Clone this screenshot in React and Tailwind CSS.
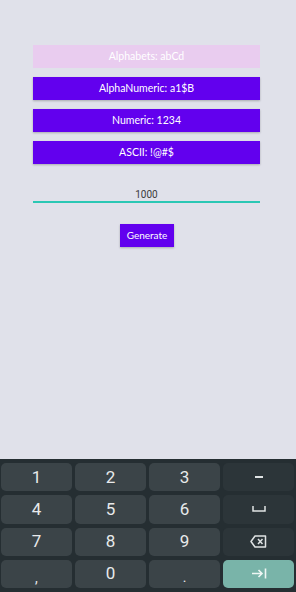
import React from "react";

function Key({ children, variant = "num" }) {
  const cls =
    variant === "num"
      ? "bg-[#3b4448] text-[#e8eaeb]"
      : variant === "fn"
      ? "bg-[#2c3539] text-[#dfe3e4]"
      : "bg-[#79b4a9] text-[#eef6f4]";
  return (
    <div className={`${cls} rounded-[5px] flex items-center justify-center text-[17px] leading-none`}>
      {children}
    </div>
  );
}

export default function App() {
  const font = { fontFamily: "Lato, 'Noto Sans', sans-serif" };
  return (
    <div className="w-[296px] h-[592px] flex flex-col overflow-hidden" style={font}>
      <div className="flex-1 bg-[#e0e1ea] flex flex-col pl-[33px] pt-[45px]">
        <div className="w-[227px] flex flex-col gap-[9px]">
          <div className="h-[23px] bg-[#e9ccef] text-white text-[10.5px] flex items-center justify-center">
            Alphabets: abCd
          </div>
          <div className="h-[23px] bg-[#6200ee] text-white text-[10.5px] flex items-center justify-center shadow-[0_1px_2px_rgba(0,0,0,0.25)]">
            AlphaNumeric: a1$B
          </div>
          <div className="h-[23px] bg-[#6200ee] text-white text-[10.5px] flex items-center justify-center shadow-[0_1px_2px_rgba(0,0,0,0.25)]">
            Numeric: 1234
          </div>
          <div className="h-[23px] bg-[#6200ee] text-white text-[10.5px] flex items-center justify-center shadow-[0_1px_2px_rgba(0,0,0,0.25)]">
            ASCII: !@#$
          </div>
        </div>
        <div
          className="w-[227px] mt-[22px] h-[17px] pt-[2px] border-b-[2px] border-[#2bc7b4] flex items-center justify-center text-[10px] text-[#3a3a3a]"
          style={{ fontFamily: "Roboto, sans-serif" }}
        >
          1000
        </div>
        <div className="ml-[87px] mt-[21px] w-[54px] h-[23px] bg-[#6200ee] text-white text-[10px] flex items-center justify-center shadow-[0_1px_2px_rgba(0,0,0,0.25)]">
          Generate
        </div>
      </div>
      <div
        className="h-[133px] bg-[#252e32] grid grid-cols-4 grid-rows-4 gap-x-[3px] gap-y-[4px] pl-[1px] pr-[2px] pt-[4px] pb-[4px]"
        style={{ fontFamily: "Roboto, sans-serif" }}
      >
        <Key>1</Key>
        <Key>2</Key>
        <Key>3</Key>
        <Key variant="fn">
          <div className="w-[8px] h-[1.5px] bg-[#dfe3e4]" />
        </Key>
        <Key>4</Key>
        <Key>5</Key>
        <Key>6</Key>
        <Key variant="fn">
          <svg width="14" height="6" viewBox="0 0 14 6" fill="none" stroke="#dfe3e4" strokeWidth="1.5">
            <path d="M1 0v5h12V0" />
          </svg>
        </Key>
        <Key>7</Key>
        <Key>8</Key>
        <Key>9</Key>
        <Key variant="fn">
          <svg width="17" height="13" viewBox="0 0 17 13" fill="none" stroke="#dfe3e4" strokeWidth="1.5" strokeLinejoin="round">
            <path d="M5 1h10.5v11H5L1 6.5z" />
            <path d="M8 4l4.5 5M12.5 4L8 9" />
          </svg>
        </Key>
        <Key>
          <span className="text-[14px] translate-y-[4px]">,</span>
        </Key>
        <Key>0</Key>
        <Key>
          <span className="text-[14px] translate-y-[3px]">.</span>
        </Key>
        <Key variant="go">
          <svg width="16" height="11" viewBox="0 0 16 11" fill="none" stroke="#eef6f4" strokeWidth="1.6">
            <path d="M1 5.5h10M7.5 2l3.5 3.5L7.5 9M14.5 0.5v10" />
          </svg>
        </Key>
      </div>
    </div>
  );
}
